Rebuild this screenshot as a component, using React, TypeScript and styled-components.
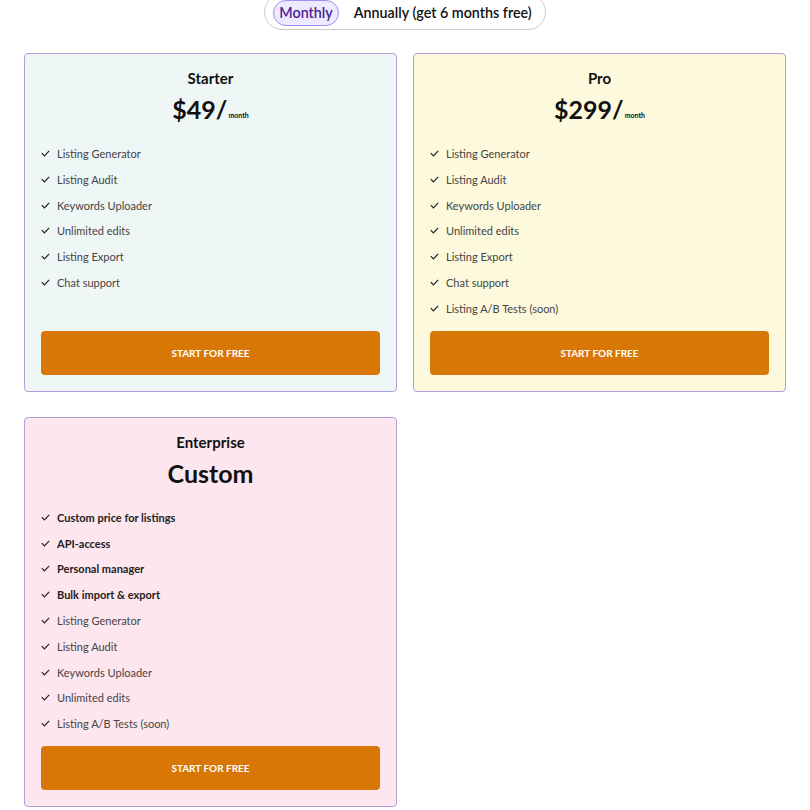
import React from 'react';
import styled, { createGlobalStyle } from 'styled-components';

const GlobalStyle = createGlobalStyle`
  * { box-sizing: border-box; }
  body {
    margin: 0;
    background: #ffffff;
    font-family: 'Lato', 'Noto Sans', sans-serif;
    color: #111;
  }
`;

const Page = styled.main`
  width: 810px;
  padding: 0 24px 0 24px;
  display: flex;
  flex-direction: column;
  align-items: center;
`;

const Toggle = styled.div`
  margin-top: -6px;
  display: flex;
  align-items: center;
  gap: 9px;
  padding: 5px 7px 3px 8px;
  border: 1px solid #c9c9c9;
  border-radius: 999px;
  background: #fff;
`;

const Option = styled.span<{ $active?: boolean }>`
  font-size: 14.3px;
  font-weight: 600;
  line-height: 18px;
  padding: 3px 5px 3px 5px;
  border-radius: 999px;
  color: ${(p) => (p.$active ? '#4c1d95' : '#111')};
  background: ${(p) => (p.$active ? '#ede9fe' : 'transparent')};
  border: 1px solid ${(p) => (p.$active ? '#a78bfa' : 'transparent')};
`;

const Grid = styled.section`
  margin-top: 23px;
  width: 100%;
  display: grid;
  grid-template-columns: repeat(2, 1fr);
  column-gap: 16px;
  row-gap: 25px;
`;

const Card = styled.div<{ $bg: string }>`
  background: ${(p) => p.$bg};
  border: 1px solid #b39ddb;
  border-radius: 4px;
  padding: 16px;
  display: flex;
  flex-direction: column;
`;

const Title = styled.h3`
  margin: 0;
  text-align: center;
  font-size: 15px;
  font-weight: 700;
  line-height: 16px;
`;

const Price = styled.div`
  margin-top: 8px;
  display: flex;
  justify-content: center;
  align-items: flex-end;
  height: 30px;
  font-size: 25px;
  font-weight: 700;
  line-height: 30px;

  small {
    font-size: 7px;
    font-weight: 700;
    line-height: 10px;
    margin-left: 1px;
    margin-bottom: 4px;
  }
`;

const Features = styled.ul`
  list-style: none;
  margin: 21px 0 0;
  padding: 0;
  display: flex;
  flex-direction: column;
  gap: 8.8px;
`;

const Feature = styled.li<{ $strong?: boolean }>`
  display: flex;
  align-items: center;
  gap: 7px;
  font-size: 11px;
  line-height: 17px;
  color: ${(p) => (p.$strong ? '#222' : '#444')};
  font-weight: ${(p) => (p.$strong ? 700 : 400)};

  svg {
    flex: none;
  }
`;

const Button = styled.button`
  height: 44px;
  width: 100%;
  border: none;
  border-radius: 4px;
  background: #d97706;
  color: #fff;
  font-family: 'Lato', sans-serif;
  font-size: 10px;
  font-weight: 700;
  cursor: pointer;
`;

const ButtonGap = styled.div`
  flex: 1;
  min-height: 14px;
`;

const Check = () => (
  <svg width="9" height="7" viewBox="0 0 9 7" fill="none">
    <path d="M0.8 3.2 L3.4 5.8 L8.2 0.9" stroke="#222" strokeWidth="1.2" />
  </svg>
);

type Plan = {
  name: string;
  price?: string;
  custom?: string;
  bg: string;
  strong?: string[];
  items: string[];
};

const base = ['Listing Generator', 'Listing Audit', 'Keywords Uploader', 'Unlimited edits'];

const plans: Plan[] = [
  { name: 'Starter', price: '$49/', bg: '#eff6f6', items: [...base, 'Listing Export', 'Chat support'] },
  { name: 'Pro', price: '$299/', bg: '#fdf9dd', items: [...base, 'Listing Export', 'Chat support', 'Listing A/B Tests (soon)'] },
  {
    name: 'Enterprise',
    custom: 'Custom',
    bg: '#fde6ee',
    strong: ['Custom price for listings', 'API-access', 'Personal manager', 'Bulk import & export'],
    items: [...base, 'Listing A/B Tests (soon)'],
  },
];

const App = () => {
  return (
    <>
      <GlobalStyle />
      <Page>
        <Toggle>
          <Option $active>Monthly</Option>
          <Option>Annually (get 6 months free)</Option>
        </Toggle>
        <Grid>
          {plans.map((plan) => (
            <Card key={plan.name} $bg={plan.bg}>
              <Title>{plan.name}</Title>
              <Price>
                {plan.price ?? plan.custom}
                {plan.price && <small>month</small>}
              </Price>
              <Features>
                {(plan.strong ?? []).map((f) => (
                  <Feature key={f} $strong>
                    <Check />
                    {f}
                  </Feature>
                ))}
                {plan.items.map((f) => (
                  <Feature key={f}>
                    <Check />
                    {f}
                  </Feature>
                ))}
              </Features>
              <ButtonGap />
              <Button>START FOR FREE</Button>
            </Card>
          ))}
        </Grid>
      </Page>
    </>
  );
};

export default App;
